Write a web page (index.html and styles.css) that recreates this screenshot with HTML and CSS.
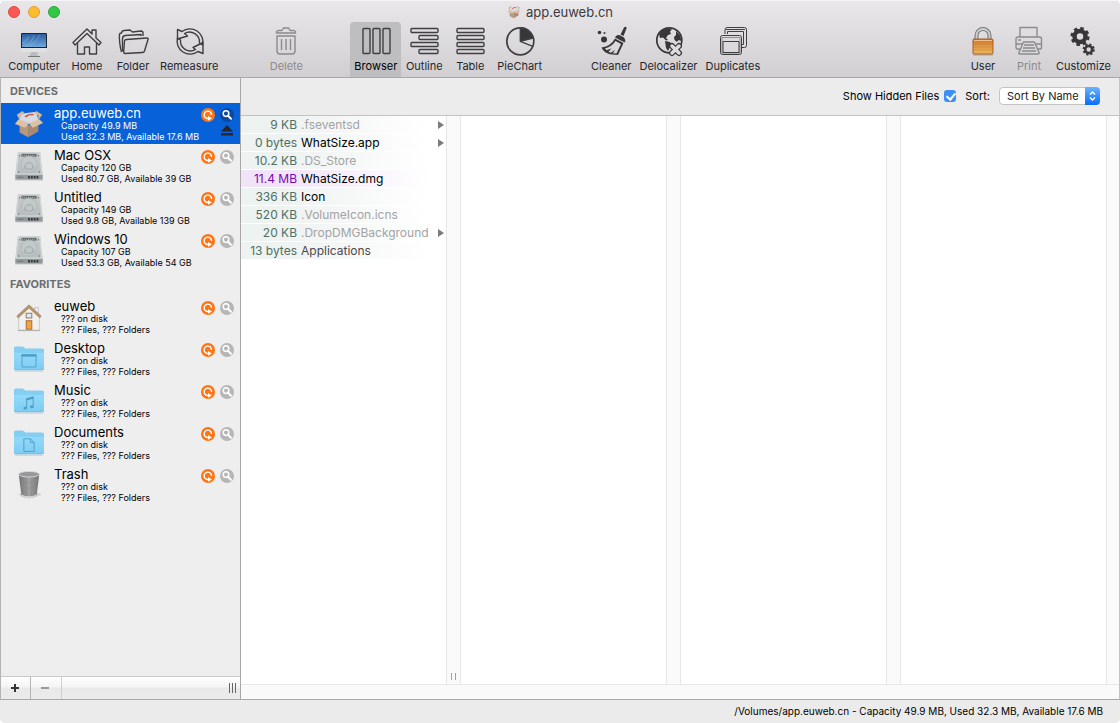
FILE: index.html
```html
<!DOCTYPE html>
<html lang="en">
<head>
  <meta charset="UTF-8" />
  <meta name="viewport" content="width=device-width, initial-scale=1" />
  <title>app.euweb.cn</title>
  <link rel="stylesheet" href="styles.css">
</head>
<body>
  <!-- Shared icons -->
  <svg class="defs" aria-hidden="true">
    <defs>
      <linearGradient id="screen" x1="0" y1="0" x2="0" y2="1"><stop offset="0" stop-color="#2a5c9e"/><stop offset="1" stop-color="#6fa9dc"/></linearGradient>
      <linearGradient id="metal" x1="0" y1="0" x2="0" y2="1"><stop offset="0" stop-color="#c6cbcc"/><stop offset="1" stop-color="#b4babb"/></linearGradient>
      <linearGradient id="gold" x1="0" y1="0" x2="0" y2="1"><stop offset="0" stop-color="#d0742a"/><stop offset="0.5" stop-color="#e09a48"/><stop offset="1" stop-color="#efb75c"/></linearGradient>
      <linearGradient id="folderBlue" x1="0" y1="0" x2="0" y2="1"><stop offset="0" stop-color="#93dafa"/><stop offset="1" stop-color="#7fcdf3"/></linearGradient>
      <linearGradient id="bin" x1="0" y1="0" x2="1" y2="0"><stop offset="0" stop-color="#6f6f72"/><stop offset="0.5" stop-color="#a2a2a4"/><stop offset="1" stop-color="#717174"/></linearGradient>
    </defs>
    <symbol id="rescan" viewBox="0 0 14 14">
      <circle cx="7" cy="7" r="7" fill="#ff7414"/>
      <path d="M10.500 7A3.700 3.700 0 1 0 7 10.500" fill="none" stroke="#fff" stroke-width="1.400"/>
      <path d="M7 8l4 2.400-4 2.400z" fill="#fff"/>
    </symbol>
    <symbol id="glass" viewBox="0 0 14 14">
      <circle cx="7" cy="7" r="7" fill="currentColor"/>
      <circle cx="6" cy="5.600" r="2.800" fill="none" stroke="#fff" stroke-width="1.500"/>
      <path d="M8 7.800l3 3" stroke="#fff" stroke-width="2" stroke-linecap="round"/>
    </symbol>
    <symbol id="box" viewBox="0 0 32 32">
      <path d="M7 5l17-2 2 9-10 4-10-4z" fill="#d8dbe2"/>
      <path d="M11 8c3-3 8-4 11-2l-3 1c-3-1-4 1-6 2z" fill="#cf5a4c"/>
      <path d="M6 13l9 4v13L6 25z" fill="#b8977c"/>
      <path d="M26 13l-11 4v13l11-6z" fill="#a98a70"/>
      <path d="M6 12L3 6l6-4 2 2-4 3zM26 12l4-6-6-4-2 2 4 3z" fill="#d3b69b"/>
      <path d="M5 11l11 4-4 5-11-4zM27 11l-11 4 4 5 11-5z" fill="#dcc1a7"/>
    </symbol>
    <symbol id="disk" viewBox="0 0 32 32">
      <path d="M1 30h30v1.500H1z" fill="#999" opacity=".4"/>
      <path d="M4 1h24l2.500 24v4q0 1.500-1.500 1.500H3q-1.500 0-1.500-1.500v-4z" fill="url(#metal)"/>
      <path d="M1.500 25.500h29V29q0 1.500-1.500 1.500H3q-1.500 0-1.500-1.500z" fill="#94999b"/>
      <path d="M15 28h12" stroke="#34383a" stroke-width="2.500" stroke-dasharray="2 1"/>
      <path d="M4 28h6" stroke="#6c7173"/>
      <path d="M4.500 2h23l2 22.500h-27z" fill="none" stroke="#d8dbdc"/>
      <rect x="8" y="3" width="16" height="3" fill="#5f6466"/>
      <path d="M9 4.500h14" stroke="#c9cccd" stroke-dasharray="1 1"/>
      <circle cx="16" cy="14" r="8.500" fill="#c3c8c9" stroke="#b2b8b9"/>
      <path d="M10 18l2-4q4-5 8 0l2 4q-6 5-12 0z" fill="#a9afb1"/>
      <ellipse cx="16" cy="16" rx="3.500" ry="3" fill="#c1c6c7"/>
      <circle cx="6" cy="5" r=".8" fill="#777"/><circle cx="26" cy="5" r=".8" fill="#777"/><circle cx="5" cy="22.500" r=".8" fill="#777"/><circle cx="27" cy="22.500" r=".8" fill="#777"/>
    </symbol>
    <symbol id="folder" viewBox="0 0 32 32">
      <path d="M1 28.500h30v1H1z" fill="#aaa" opacity=".5"/>
      <path d="M0 5q0-2 2-2h7q1 0 2 1l1 1h18q2 0 2 2v19q0 2-2 2H2q-2 0-2-2z" fill="#6dbde6"/>
      <path d="M0 5q0-2 2-2h7q1 0 2 1l1 1h18q2 0 2 2v2H0z" fill="#84cef2"/>
      <path d="M0 9h32v16q0 2-2 2H2q-2 0-2-2z" fill="url(#folderBlue)"/>
    </symbol>
  </svg>

  <div class="window">
    <header class="titlebar">
      <div class="lights">
        <button class="light red" aria-label="Close"></button>
        <button class="light yellow" aria-label="Minimize"></button>
        <button class="light green" aria-label="Zoom"></button>
      </div>
      <h1 class="title"><svg class="title-icon"><use href="#box"/></svg>app.euweb.cn</h1>
    </header>

    <nav class="toolbar">
      <div class="group">
        <button class="tool computer">
          <svg viewBox="0 0 32 32"><rect x="3" y="7" width="26" height="19" rx="1" fill="#dfe1e3"/><path d="M3 22V8q0-1 1-1h24q1 0 1 1v14z" fill="#1d2530"/><path d="M4 8h24v13H4z" fill="url(#screen)"/><path d="M8 20q6-3 8-11M12 20q6-4 10-11M5 17q4-2 6-7" fill="none" stroke="#9cc8ec" opacity=".4"/><path d="M13 26h6l1 4h-8z" fill="#b9bbbe"/><path d="M10 30h12v1H10z" fill="#77797c"/></svg>
          Computer
        </button>
        <button class="tool">
          <svg class="line" viewBox="0 0 32 32"><path d="M16 3l5 5V4h4v8l5 4.500-2 2.500L16 7.500 4 19l-2-2.500z"/><path d="M6.500 17v11h7v-7h5v7h7V17"/></svg>
          Home
        </button>
        <button class="tool">
          <svg class="line" viewBox="0 0 32 32"><path d="M4.500 26C3 22 2 12 2.500 8Q3 7 4.500 7 5 4.500 7 4.500l6-.5 2.500 2L24 5q2 0 2 2v3"/><path d="M24 10V8.500L8 9.500Q5.500 10 5.500 13v12.500"/><path d="M9.500 13.500L30 12q1.500 0 1 1.500L27.500 25q-.5 1.500-2 1.500L8 27.500Q6.500 27.500 6.700 25L7.500 15q.2-1.400 2-1.500z"/></svg>
          Folder
        </button>
        <button class="tool remeasure">
          <svg class="line" viewBox="0 0 32 32"><path d="M9 5.500A13 13 0 0 1 29.500 19L26.500 17A10 10 0 0 0 11.500 7.500L14.500 10 4.500 13V3.500z"/><path d="M25 25.500A13 13 0 0 1 4.500 12L7.500 14A10 10 0 0 0 22.500 23.500L20 21.500l10-5V27.500z"/></svg>
          Remeasure
        </button>
      </div>
      <div class="group">
        <button class="tool" disabled>
          <svg class="line" viewBox="0 0 32 32"><path d="M6.500 7V5.500l1.500-1h4L13.500 2h5L20 4.500h4l1.500 1V7zM7 10h18v15q0 3-3 3H10q-3 0-3-3zM11.500 13v11M16 13v11M20.500 13v11"/></svg>
          Delete
        </button>
      </div>
      <div class="group">
        <button class="tool active">
          <svg class="line" viewBox="0 0 32 32"><rect x="3" y="2.500" width="7" height="25" rx="1"/><rect x="13" y="2.500" width="7" height="25" rx="1"/><rect x="23" y="2.500" width="7" height="25" rx="1"/></svg>
          Browser
        </button>
        <button class="tool">
          <svg class="line" viewBox="0 0 32 32"><rect x="3" y="2.500" width="27" height="4" rx="1"/><rect x="11" y="9.500" width="19" height="4" rx="1"/><rect x="3" y="16.500" width="27" height="4" rx="1"/><rect x="11" y="23.500" width="19" height="4" rx="1"/></svg>
          Outline
        </button>
        <button class="tool">
          <svg class="line" viewBox="0 0 32 32"><rect x="3" y="2.500" width="27" height="4" rx="1"/><rect x="3" y="9.500" width="27" height="4" rx="1"/><rect x="3" y="16.500" width="27" height="4" rx="1"/><rect x="3" y="23.500" width="27" height="4" rx="1"/></svg>
          Table
        </button>
        <button class="tool">
          <svg class="line" viewBox="0 0 32 32"><circle cx="16.300" cy="15.300" r="13.500" stroke-width="1.700"/><path d="M16.300 15.300V1.800A13.500 13.500 0 0 1 29.200 12z" fill="#37373a"/><path d="M16.300 15.300l12.500 5"/></svg>
          PieChart
        </button>
      </div>
      <div class="group">
        <button class="tool">
          <svg class="solid" viewBox="0 0 32 32"><circle cx="4.500" cy="6.500" r="1.800"/><circle cx="9.500" cy="7" r="1"/><circle cx="9" cy="13.500" r="3"/><path d="M29 1.500q2-1.500 2.700.5L28.500 10l-3-1.500zM21 10q2-1.500 4-.8l4 2.300q1.500 1.500 1.300 4.500l-1 .3-9.300-4.800z"/><path d="M20 12.500L28.500 17 23 29l-8-.8Q9 27 6.500 21.500 16 20 20 12.500zM20.500 15Q17 20.500 10 22.500l1.500 1.700 5-1.700-3 3.300 2.500 1 4-3-2 3.500 3.500.3L26 18z" fill-rule="evenodd"/></svg>
          Cleaner
        </button>
        <button class="tool">
          <svg class="solid" viewBox="0 0 32 32"><circle cx="17.300" cy="14.300" r="12.500" fill="none" stroke="#37373a" stroke-width="1.700"/><path d="M7 8q4-6 10-5.500l3 1-2 2 1 2.500-3 1-2 3 2 2-2 .5-3-3-3 .5zM24 5l4 4 1.500 6-3-1-1.500 2-2.500-2-.5-3 2-2zM13 15l5 1 2 3-2 2-2 4-2-3z"/><path d="M20 20l7 7m0-7l-7 7" stroke="#37373a" stroke-width="6" stroke-linecap="round"/><path d="M20 20l7 7m0-7l-7 7" stroke="#dddbde" stroke-width="3.500" stroke-linecap="round"/></svg>
          Delocalizer
        </button>
        <button class="tool">
          <svg class="line thin" viewBox="0 0 32 32"><path d="M8 8V4q0-2.500 2-2.500h17.500q2 0 2 2v16q0 2-2 2H25M10.500 8V5.500h16v13H25M9 3.500h19"/><rect x="3.500" y="9.500" width="21" height="19" rx="2"/><rect x="6" y="15.500" width="16" height="11"/><path d="M5 11.500h18v15.500H5z" opacity=".5"/></svg>
          Duplicates
        </button>
      </div>
      <div class="group last">
        <button class="tool">
          <svg viewBox="0 0 32 32"><path d="M9.500 15V9.500a6.500 6.500 0 0 1 13 0V15" fill="none" stroke="#77787b" stroke-width="4"/><path d="M9.500 15V9.500a6.500 6.500 0 0 1 13 0V15" fill="none" stroke="#d0d1d3" stroke-width="1.800"/><rect x="6" y="13" width="20" height="15" rx="1" fill="url(#gold)" stroke="#a85a22"/><path d="M7 14.500h18" stroke="#f3c08c"/><path d="M7 18h18M7 21h18M7 24h18" stroke="#c27d32" opacity=".4"/><path d="M6 29h20" stroke="#8d6a48" opacity=".5"/></svg>
          User
        </button>
        <button class="tool" disabled>
          <svg class="line" viewBox="0 0 32 32"><path d="M7 11V1.500h17V11M8 23H4.500Q3 23 3 21v-8q0-2 2-2h21.500q2 0 2 2v8q0 2-1.500 2H24M10.500 16h11l4.500 10.500q.5 1.500-1 1.500H7q-1.500 0-1-1.500zM11 19h10M10 22h12M9 25h14M5 14h3M3 18h6m14 0h5.500"/></svg>
          Print
        </button>
        <button class="tool">
          <svg class="gears" viewBox="0 0 32 32"><circle cx="13" cy="10.500" r="5.500" stroke-width="4.500"/><circle cx="13" cy="10.500" r="8.300" stroke-width="2.600" stroke-dasharray="3.500 3.020"/><circle cx="21.700" cy="23.500" r="3.500" stroke-width="2.600"/><circle cx="21.700" cy="23.500" r="5.200" stroke-width="1.800" stroke-dasharray="2.200 1.880"/></svg>
          Customize
        </button>
      </div>
    </nav>

    <div class="main">
      <aside class="sidebar">
        <div class="places">
          <h2>DEVICES</h2>
          <ul>
            <li class="place selected">
              <svg class="place-icon"><use href="#box"/></svg>
              <div class="info"><strong>app.euweb.cn</strong><span>Capacity 49.9 MB</span><span>Used 32.3 MB, Available 17.6 MB</span></div>
              <div class="actions">
                <button aria-label="Rescan"><svg><use href="#rescan"/></svg></button>
                <button aria-label="Reveal"><svg><use href="#glass"/></svg></button>
                <button class="eject" aria-label="Eject"><svg viewBox="0 0 14 14"><path d="M7 1l6 6.500H1zM1 9h12v2.500H1z" fill="#24262b"/></svg></button>
              </div>
            </li>
            <li class="place">
              <svg class="place-icon"><use href="#disk"/></svg>
              <div class="info"><strong>Mac OSX</strong><span>Capacity 120 GB</span><span>Used 80.7 GB, Available 39 GB</span></div>
              <div class="actions">
                <button aria-label="Rescan"><svg><use href="#rescan"/></svg></button>
                <button aria-label="Reveal"><svg><use href="#glass"/></svg></button>
              </div>
            </li>
            <li class="place">
              <svg class="place-icon"><use href="#disk"/></svg>
              <div class="info"><strong>Untitled</strong><span>Capacity 149 GB</span><span>Used 9.8 GB, Available 139 GB</span></div>
              <div class="actions">
                <button aria-label="Rescan"><svg><use href="#rescan"/></svg></button>
                <button aria-label="Reveal"><svg><use href="#glass"/></svg></button>
              </div>
            </li>
            <li class="place">
              <svg class="place-icon"><use href="#disk"/></svg>
              <div class="info"><strong>Windows 10</strong><span>Capacity 107 GB</span><span>Used 53.3 GB, Available 54 GB</span></div>
              <div class="actions">
                <button aria-label="Rescan"><svg><use href="#rescan"/></svg></button>
                <button aria-label="Reveal"><svg><use href="#glass"/></svg></button>
              </div>
            </li>
          </ul>
          <h2>FAVORITES</h2>
          <ul>
            <li class="place">
              <svg class="place-icon" viewBox="0 0 32 32"><path d="M22 6h4v7h-4z" fill="#eee" stroke="#c5c5c5"/><path d="M5 15L16 5l11 10v15H5z" fill="#f2f1ef" stroke="#c9c8c6"/><path d="M16 3L3 15l1.500 2L16 6.500 27.500 17l1.500-2z" fill="#b6946c" stroke="#8f7150" stroke-width=".5"/><rect x="13" y="12" width="6" height="5" fill="#dfeaf5" stroke="#8c765b"/><rect x="13" y="20" width="6" height="9" fill="#f0a545" stroke="#a8682a"/><path d="M4 30.500h24" stroke="#aaa"/></svg>
              <div class="info"><strong>euweb</strong><span>??? on disk</span><span>??? Files, ??? Folders</span></div>
              <div class="actions">
                <button aria-label="Rescan"><svg><use href="#rescan"/></svg></button>
                <button aria-label="Reveal"><svg><use href="#glass"/></svg></button>
              </div>
            </li>
            <li class="place">
              <svg class="place-icon" viewBox="0 0 32 32"><use href="#folder"/><path d="M8.500 11.500h15v13h-15z" fill="none" stroke="#4d9fcb"/><path d="M8 11h16v2.500H8z" fill="#4d9fcb"/></svg>
              <div class="info"><strong>Desktop</strong><span>??? on disk</span><span>??? Files, ??? Folders</span></div>
              <div class="actions">
                <button aria-label="Rescan"><svg><use href="#rescan"/></svg></button>
                <button aria-label="Reveal"><svg><use href="#glass"/></svg></button>
              </div>
            </li>
            <li class="place">
              <svg class="place-icon" viewBox="0 0 32 32"><use href="#folder"/><path d="M13.500 23v-9l7-1.500V22" fill="none" stroke="#4d9fcb"/><path d="M13 13l8-2v2.500l-8 2z" fill="#4d9fcb"/><ellipse cx="12" cy="23.500" rx="2" ry="1.600" fill="#4d9fcb"/><ellipse cx="19" cy="22.200" rx="2" ry="1.600" fill="#4d9fcb"/></svg>
              <div class="info"><strong>Music</strong><span>??? on disk</span><span>??? Files, ??? Folders</span></div>
              <div class="actions">
                <button aria-label="Rescan"><svg><use href="#rescan"/></svg></button>
                <button aria-label="Reveal"><svg><use href="#glass"/></svg></button>
              </div>
            </li>
            <li class="place">
              <svg class="place-icon" viewBox="0 0 32 32"><use href="#folder"/><path d="M10.500 11.500h7l4 4v9.500h-11zM17.500 11.500v4h4" fill="none" stroke="#4d9fcb"/></svg>
              <div class="info"><strong>Documents</strong><span>??? on disk</span><span>??? Files, ??? Folders</span></div>
              <div class="actions">
                <button aria-label="Rescan"><svg><use href="#rescan"/></svg></button>
                <button aria-label="Reveal"><svg><use href="#glass"/></svg></button>
              </div>
            </li>
            <li class="place">
              <svg class="place-icon" viewBox="0 0 32 32"><ellipse cx="17" cy="26" rx="12" ry="3" fill="#bbb" opacity=".5"/><path d="M5 4h22l-3 24q-8 4-16 0z" fill="url(#bin)"/><path d="M9 8l1 19M13 8l.5 20M19 8l-.5 20M23 8l-1 19M6 12q10 3 20 0M7 18q9 3 18 0" fill="none" stroke="#8b8b8e" stroke-width=".7"/><path d="M8 26q8 4 16 0v2q-8 4-16 0z" fill="#d6d6d8"/><ellipse cx="16" cy="4.500" rx="11" ry="3" fill="#98989b" stroke="#d7d7d9"/></svg>
              <div class="info"><strong>Trash</strong><span>??? on disk</span><span>??? Files, ??? Folders</span></div>
              <div class="actions">
                <button aria-label="Rescan"><svg><use href="#rescan"/></svg></button>
                <button aria-label="Reveal"><svg><use href="#glass"/></svg></button>
              </div>
            </li>
          </ul>
        </div>
        <div class="sidebar-bar">
          <button aria-label="Add"><svg viewBox="0 0 10 10"><path d="M1 5h8M5 1v8" stroke="#333" stroke-width="2"/></svg></button>
          <button aria-label="Remove" disabled><svg viewBox="0 0 10 10"><path d="M1 5h8" stroke="#999" stroke-width="2"/></svg></button>
          <span class="grip"></span>
        </div>
      </aside>

      <section class="content">
        <div class="options">
          <label for="hidden">Show Hidden Files</label>
          <input type="checkbox" id="hidden" checked>
          <label class="sort-label" for="sort">Sort:</label>
          <div class="select">
            <select id="sort"><option>Sort By Name</option><option>Sort By Size</option></select>
            <svg viewBox="0 0 15 18"><path d="M5 7.500L7.500 5 10 7.500M5 10.500l2.500 2.500 2.500-2.500" fill="none" stroke="#fff" stroke-width="1.400"/></svg>
          </div>
        </div>

        <div class="columns">
          <div class="column">
            <ul class="files">
              <li class="dim folder"><span class="size">9 KB</span><span class="name">.fseventsd</span></li>
              <li class="folder"><span class="size">0 bytes</span><span class="name">WhatSize.app</span></li>
              <li class="dim"><span class="size">10.2 KB</span><span class="name">.DS_Store</span></li>
              <li class="big"><span class="size">11.4 MB</span><span class="name">WhatSize.dmg</span></li>
              <li><span class="size">336 KB</span><span class="name">Icon</span></li>
              <li class="dim"><span class="size">520 KB</span><span class="name">.VolumeIcon.icns</span></li>
              <li class="dim folder"><span class="size">20 KB</span><span class="name">.DropDMGBackground</span></li>
              <li class="alias"><span class="size">13 bytes</span><span class="name">Applications</span></li>
            </ul>
            <div class="scroller"><span class="handle"></span></div>
          </div>
          <div class="column"><div class="files"></div><div class="scroller"></div></div>
          <div class="column"><div class="files"></div><div class="scroller"></div></div>
          <div class="column"><div class="files"></div><div class="scroller"></div></div>
        </div>
        <div class="track"></div>
      </section>
    </div>

    <footer class="status">/Volumes/app.euweb.cn - Capacity 49.9 MB, Used 32.3 MB, Available 17.6 MB</footer>
  </div>
</body>
</html>
```
FILE: styles.css
```css
* {
  box-sizing: border-box;
}

body {
  margin: 0;
  font-family: Inter, 'Liberation Sans', sans-serif;
  font-size: 11px;
  color: #000;
  background: #fff;
}

h1, h2, ul {
  margin: 0;
  padding: 0;
  font-weight: 400;
}

ul {
  list-style: none;
}

button {
  margin: 0;
  padding: 0;
  border: none;
  background: none;
  font: inherit;
  color: inherit;
}

.defs {
  position: absolute;
  width: 0;
  height: 0;
}

.window {
  display: flex;
  flex-direction: column;
  height: 100vh;
  background: linear-gradient(#e9e7ea, #d1cfd2 77px, #ececec 78px);
  border-radius: 5px;
  overflow: hidden;
}

/* Title bar */
.titlebar {
  display: grid;
  grid-template-columns: 1fr auto 1fr;
  align-items: center;
  height: 22px;
  flex: none;
  border-top: 1px solid #f6f5f6;
}

.lights {
  display: flex;
  gap: 8px;
  padding-left: 8px;
}

.light {
  width: 12px;
  height: 12px;
  border-radius: 50%;
}

.red { background: #fc5753; border: 1px solid #df4744; }
.yellow { background: #fdbc2f; border: 1px solid #de9f34; }
.green { background: #33c748; border: 1px solid #27aa35; }

.title {
  display: flex;
  align-items: center;
  gap: 5px;
  font-size: 13px;
  line-height: 20px;
  color: #3b3b3d;
}

.title-icon {
  width: 14px;
  height: 14px;
}

/* Toolbar */
.toolbar {
  display: flex;
  gap: 41px;
  height: 56px;
  flex: none;
  padding: 0 5px 0 4px;
  border-bottom: 1px solid #a9a7aa;
}

.group {
  display: flex;
}

.last {
  margin-left: auto;
}

.tool {
  display: flex;
  flex-direction: column;
  align-items: center;
  min-width: 46px;
  height: 55px;
  padding: 4px 4px 0;
  line-height: 16px;
  color: #262628;
}

.computer {
  min-width: 60px;
}

.remeasure {
  min-width: 66px;
}

.tool svg {
  width: 32px;
  height: 32px;
}

.tool:disabled {
  color: #8b8a8d;
}

.active {
  background: #bebdbf;
  border-radius: 4px 4px 0 0;
  color: #000;
}

.line {
  fill: none;
  stroke: #3f3f42;
  stroke-width: 1.4;
  stroke-linejoin: round;
}

.thin {
  stroke-width: 1;
}

.tool:disabled .line {
  stroke: #8b8a8d;
}

.solid {
  fill: #37373a;
}

.gears {
  fill: none;
  stroke: #37373a;
}

/* Sidebar */
.main {
  display: flex;
  flex: 1;
  min-height: 0;
  border-left: 1px solid #b4b4b4;
  border-right: 1px solid #c4c4c4;
}

.sidebar {
  display: flex;
  flex-direction: column;
  flex: 0 0 240px;
  background: #eee;
  border-right: 1px solid #a8a8a8;
}

.places {
  flex: 1;
  overflow: hidden;
}

.places h2 {
  height: 25px;
  padding-left: 9px;
  font-size: 11px;
  font-weight: 700;
  line-height: 26px;
  color: #6d6d6d;
}

.place {
  display: flex;
  height: 41px;
  margin-bottom: 1px;
  padding: 3px 6px 0 13px;
}

.place-icon {
  width: 30px;
  height: 30px;
  margin-top: 3px;
  flex: none;
}

.info {
  flex: 1;
  display: flex;
  flex-direction: column;
  padding-left: 10px;
  white-space: nowrap;
}

.info strong {
  font-size: 13px;
  font-weight: 400;
  line-height: 14px;
}

.info span {
  padding-left: 7px;
  font-size: 9px;
  line-height: 11px;
}

.actions {
  display: flex;
  flex-wrap: wrap;
  justify-content: flex-end;
  align-content: flex-start;
  gap: 2px 5px;
  width: 33px;
  margin-left: -33px;
  padding-top: 2px;
  color: #b6b6b6;
}

.actions button,
.actions svg {
  display: block;
  width: 14px;
  height: 14px;
}

.selected {
  background: #0762d9;
  color: #fff;
}

.selected .actions {
  color: #0c47a0;
}

.sidebar-bar {
  display: flex;
  height: 23px;
  border-top: 1px solid #c9c9c9;
  background: linear-gradient(#fff, #f4f4f4 10px, #e9e9e9 11px, #ebebeb);
}

.sidebar-bar button {
  width: 30px;
  padding: 2px 2px 0 0;
  border-right: 1px solid #b5b5b5;
}

.sidebar-bar button:disabled {
  width: 31px;
  border-color: #cfcfcf;
}

.sidebar-bar svg {
  width: 10px;
  height: 10px;
}

.grip {
  width: 8px;
  height: 10px;
  margin: 6px 3px 0 auto;
  background: repeating-linear-gradient(90deg, #666 0 1px, transparent 1px 3px);
}

/* Browser */
.content {
  display: flex;
  flex-direction: column;
  flex: 1;
  min-width: 0;
}

.options {
  display: flex;
  align-items: center;
  justify-content: flex-end;
  height: 38px;
  padding: 0 19px 1px 0;
  background: #ececec;
  border-bottom: 1px solid #c3c3c3;
}

.options input {
  appearance: none;
  width: 12px;
  height: 12px;
  margin: 0 9px 0 5px;
  border-radius: 3px;
  background: #3b8ff5;
}

.options input:checked::before {
  content: '';
  display: block;
  width: 4px;
  height: 7px;
  margin: 1px 4px;
  border: solid #fff;
  border-width: 0 2px 2px 0;
  transform: rotate(40deg);
}

.select {
  position: relative;
  margin-left: 9px;
}

.select select {
  appearance: none;
  display: block;
  width: 101px;
  height: 18px;
  padding: 0 18px 0 7px;
  border: 1px solid #c4c4c4;
  border-radius: 4px;
  background: #fff;
  font: inherit;
  color: #222;
}

.select svg {
  position: absolute;
  top: 0;
  right: 0;
  width: 15px;
  height: 18px;
  border-radius: 0 4px 4px 0;
  background: linear-gradient(#6cb3fa, #0a6cff);
  pointer-events: none;
}

.columns {
  display: flex;
  flex: 1;
  overflow: hidden;
  background: #fff;
}

.column {
  display: flex;
  flex: 1 0 220px;
}

.files {
  flex: 1;
}

.files li {
  display: flex;
  align-items: center;
  gap: 4px;
  height: 18px;
  padding-right: 2px;
  border-bottom: 1px solid #fff;
  background: linear-gradient(90deg, #eef2f1 20%, #fff 92%);
  font-size: 12px;
  line-height: 17px;
  white-space: nowrap;
}

.files .big {
  background: linear-gradient(90deg, #f1e4f8 20%, #fff 92%);
}

.size {
  width: 56px;
  text-align: right;
  color: #4d7062;
}

.big .size {
  color: #7d04b4;
}

.dim .name {
  color: #a3a3a3;
}

.alias .name {
  color: #4a4a4a;
}

.folder::after {
  content: '';
  margin-left: auto;
  border: solid transparent;
  border-width: 4px 0 4px 6px;
  border-left-color: #7c7c7c;
}

.scroller {
  display: flex;
  align-items: flex-end;
  justify-content: center;
  width: 15px;
  padding-bottom: 4px;
  background: #fafafa;
  border: solid #e7e7e7;
  border-width: 0 1px;
}

.handle {
  width: 5px;
  height: 7px;
  border: solid #a0a0a0;
  border-width: 0 1px;
}

.track {
  height: 15px;
  background: #fafafa;
  border-top: 1px solid #e7e7e7;
}

/* Status bar */
.status {
  height: 24px;
  flex: none;
  padding-right: 17px;
  border-top: 1px solid #a8a8a8;
  background: #ebebeb;
  font-size: 10px;
  line-height: 23px;
  text-align: right;
}
```
